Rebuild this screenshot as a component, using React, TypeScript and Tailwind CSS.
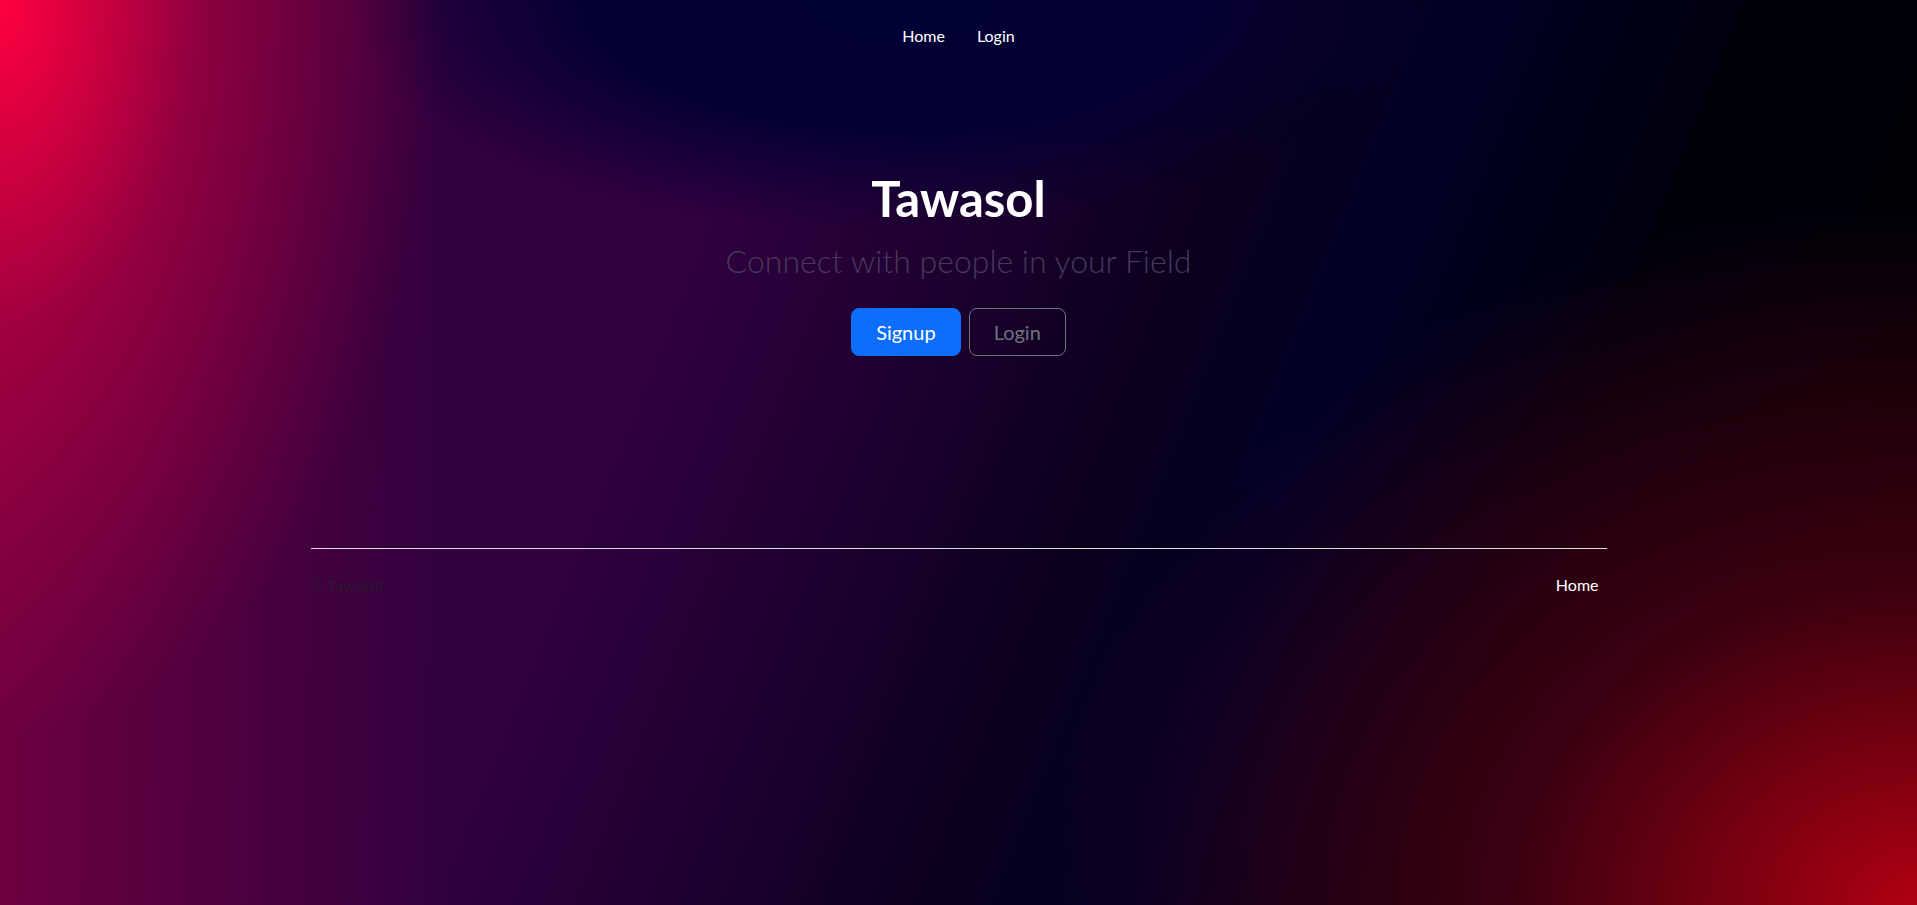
import React from 'react';

const NavLink: React.FC<{ label: string }> = ({ label }) => (
  <a href="#" className="px-4 py-2 text-base leading-6 text-white">
    {label}
  </a>
);

export default function App() {
  return (
    <div className="min-h-screen w-full font-['Lato','Noto_Sans',sans-serif] bg-[radial-gradient(440px_740px_at_0_0,rgba(255,0,64,1)_0%,rgba(255,0,64,0.35)_45%,rgba(255,0,64,0)_100%),linear-gradient(to_right,rgba(120,0,64,0.85)_0px,rgba(120,0,64,0.45)_200px,rgba(120,0,64,0)_450px),radial-gradient(880px_700px_at_100%_100%,rgba(176,0,18,1)_0%,rgba(110,0,24,0.55)_45%,rgba(40,0,20,0)_100%),radial-gradient(540px_230px_at_46%_0,rgba(0,0,52,1)_0%,rgba(0,0,52,0.9)_55%,rgba(0,0,52,0)_100%),linear-gradient(112deg,#34003c_0%,#30003f_35%,#1c002e_47%,#0a001c_57%,#000025_65%,#00000c_77%,#000000_100%)]">
      <header className="flex justify-center py-4">
        <nav className="flex">
          <NavLink label="Home" />
          <NavLink label="Login" />
        </nav>
      </header>

      <main className="flex flex-col items-center text-center">
        <h1 className="mt-[102px] text-[49px] font-bold leading-none text-white">Tawasol</h1>
        <p className="mt-[22px] text-[32px] font-light leading-none text-[#47395b]">
          Connect with people in your Field
        </p>
        <div className="mt-[31px] flex gap-2">
          <button className="h-12 rounded-lg border border-[#0d6efd] bg-[#0d6efd] px-6 text-xl text-white">
            Signup
          </button>
          <button className="h-12 rounded-lg border border-[#6c757d] px-6 text-xl text-[#6c757d]">
            Login
          </button>
        </div>
      </main>

      <footer className="mx-auto mt-[192px] flex w-[1296px] items-center justify-between border-t border-[#dcdcdc] py-4">
        <p className="text-base leading-6 text-[rgba(33,37,41,0.75)]">© Tawasol</p>
        <ul className="flex">
          <li>
            <a href="#" className="block px-2 py-2 text-base leading-6 text-white">
              Home
            </a>
          </li>
        </ul>
      </footer>
    </div>
  );
}
